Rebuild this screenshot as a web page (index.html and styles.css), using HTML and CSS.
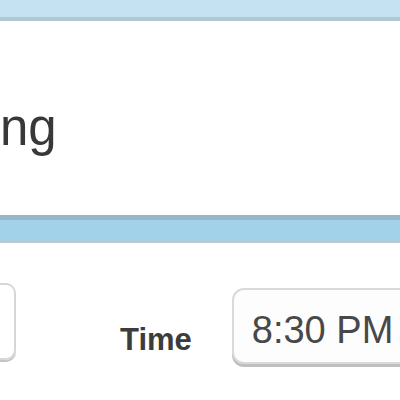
FILE: index.html
```html
<!DOCTYPE html>
<html lang="en">
<head>
    <meta charset="UTF-8">
    <meta name="viewport" content="width=device-width, initial-scale=1.0">
    <title>New Event</title>
    <link rel="stylesheet" href="styles.css">
</head>
<body>
    <div class="top-bar"></div>
    <div class="title-field">
        <span class="title-text">ng</span>
    </div>
    <div class="divider"></div>
    <div class="when-row">
        <div class="date-field"></div>
        <label class="time-label" for="time">Time</label>
        <div class="time-field" id="time">8:30 PM</div>
    </div>
</body>
</html>
```
FILE: styles.css
```css
body {
    margin: 0;
    width: 400px;
    height: 400px;
    overflow: hidden;
    background-color: #fff;
    font-family: "Liberation Sans", Arial, sans-serif;
}
.top-bar {
    height: 17px;
    background-color: #c4e2f1;
    border-bottom: 4px solid #b4c6d0;
}
.title-field {
    height: 194px;
    box-sizing: border-box;
    padding-top: 77px;
    background-color: #fff;
}
.title-text {
    font-size: 51px;
    line-height: 60px;
    color: #383838;
}
.divider {
    height: 20px;
    background-color: #a2d1ea;
    border-top: 5px solid #97b6c8;
    border-bottom: 3px solid #b3cbd6;
}
.when-row {
    display: flex;
    align-items: flex-start;
}
.date-field {
    flex: none;
    width: 106px;
    height: 77px;
    margin-left: -90px;
    margin-top: 40px;
    box-sizing: border-box;
    border: 2px solid #d6d6d6;
    border-radius: 10px;
    box-shadow: 0 2px 0 #c4c4c4;
}
.time-label {
    flex: none;
    margin-left: 104px;
    margin-top: 79px;
    font-size: 31px;
    line-height: 36px;
    font-weight: bold;
    color: #3c3c3c;
}
.time-field {
    flex: none;
    display: flex;
    align-items: center;
    width: 220px;
    height: 76px;
    margin-left: 40px;
    margin-top: 45px;
    box-sizing: border-box;
    padding: 8px 0 0 18px;
    border: 2px solid #dadada;
    border-radius: 12px;
    box-shadow: 0 3px 0 #bfbfbf;
    background-color: #fdfdfd;
    font-size: 38px;
    line-height: 42px;
    color: #484848;
}
```
